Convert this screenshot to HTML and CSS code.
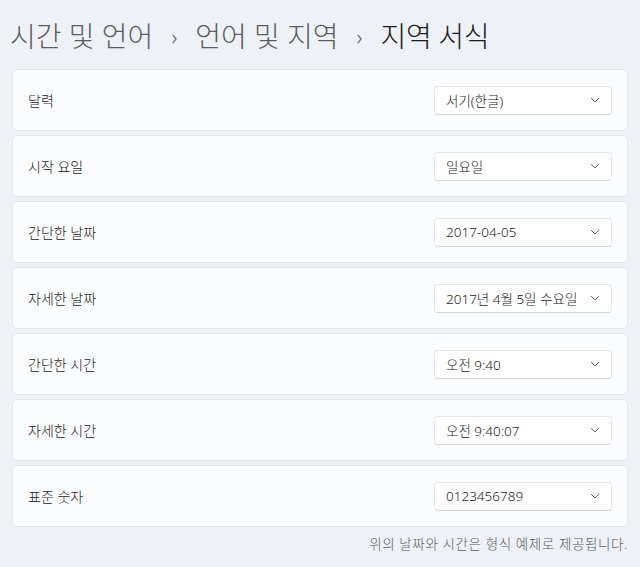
FILE: index.html
```html
<!DOCTYPE html>
<html lang="ko">
<head>
<meta charset="utf-8">
<link rel="stylesheet" href="styles.css">
</head>
<body>
<div class="page">
  <h1 class="crumbs">
    <span class="crumb">시간 및 언어</span>
    <span class="sep">›</span>
    <span class="crumb">언어 및 지역</span>
    <span class="sep">›</span>
    <span class="crumb current">지역 서식</span>
  </h1>
  <div class="list">
    <div class="card"><span class="label">달력</span><div class="select"><span>서기(한글)</span><svg class="chev" width="10" height="6" viewBox="0 0 10 6"><path d="M1 1l4 4 4-4" fill="none" stroke="#6b6b6b" stroke-width="1"/></svg></div></div>
    <div class="card"><span class="label">시작 요일</span><div class="select"><span>일요일</span><svg class="chev" width="10" height="6" viewBox="0 0 10 6"><path d="M1 1l4 4 4-4" fill="none" stroke="#6b6b6b" stroke-width="1"/></svg></div></div>
    <div class="card"><span class="label">간단한 날짜</span><div class="select"><span>2017-04-05</span><svg class="chev" width="10" height="6" viewBox="0 0 10 6"><path d="M1 1l4 4 4-4" fill="none" stroke="#6b6b6b" stroke-width="1"/></svg></div></div>
    <div class="card"><span class="label">자세한 날짜</span><div class="select"><span>2017년 4월 5일 수요일</span><svg class="chev" width="10" height="6" viewBox="0 0 10 6"><path d="M1 1l4 4 4-4" fill="none" stroke="#6b6b6b" stroke-width="1"/></svg></div></div>
    <div class="card"><span class="label">간단한 시간</span><div class="select"><span>오전 9:40</span><svg class="chev" width="10" height="6" viewBox="0 0 10 6"><path d="M1 1l4 4 4-4" fill="none" stroke="#6b6b6b" stroke-width="1"/></svg></div></div>
    <div class="card"><span class="label">자세한 시간</span><div class="select"><span>오전 9:40:07</span><svg class="chev" width="10" height="6" viewBox="0 0 10 6"><path d="M1 1l4 4 4-4" fill="none" stroke="#6b6b6b" stroke-width="1"/></svg></div></div>
    <div class="card"><span class="label">표준 숫자</span><div class="select"><span>0123456789</span><svg class="chev" width="10" height="6" viewBox="0 0 10 6"><path d="M1 1l4 4 4-4" fill="none" stroke="#6b6b6b" stroke-width="1"/></svg></div></div>
  </div>
  <p class="note">위의 날짜와 시간은 형식 예제로 제공됩니다.</p>
</div>
</body>
</html>
```
FILE: styles.css
```css
html, body {
  margin: 0;
  padding: 0;
  background: #eef2f6;
}
body {
  font-family: "Noto Sans", "Noto Sans CJK KR", sans-serif;
  color: #1b1b1b;
  width: 640px;
  height: 567px;
  overflow: hidden;
}
.page {
  padding: 14px 12px 0 12px;
}
.crumbs {
  margin: 0 0 0 -2px;
  height: 44px;
  display: flex;
  align-items: center;
  gap: 16px;
  font-size: 28px;
  font-weight: 300;
  color: #5c5c5c;
  line-height: 1;
}
.crumbs .sep {
  font-size: 22px;
  color: #5c5c5c;
  margin: 0 2px;
}
.crumbs .current {
  color: #1a1a1a;
  font-weight: 300;
  letter-spacing: -0.3px;
}
.list {
  margin-top: 11px;
  display: flex;
  flex-direction: column;
  gap: 4px;
}
.card {
  height: 60px;
  background: #fbfcfd;
  border: 1px solid #e3e6ea;
  border-radius: 5px;
  display: flex;
  align-items: center;
  justify-content: space-between;
  padding: 0 15px 0 15px;
}
.label {
  font-size: 14px;
  font-weight: 300;
  color: #1b1b1b;
}
.select {
  box-sizing: border-box;
  width: 178px;
  height: 29px;
  background: #ffffff;
  border: 1px solid #e4e6e9;
  border-bottom-color: #d3d5d8;
  border-radius: 4px;
  display: flex;
  align-items: center;
  justify-content: space-between;
  padding: 0 11px 0 11px;
  font-size: 13.5px;
  font-weight: 300;
  color: #1b1b1b;
}
.chev {
  display: block;
}
.note {
  margin: 6px 0 0 0;
  text-align: right;
  font-size: 13.5px;
  font-weight: 300;
  letter-spacing: 0.6px;
  color: #5a5a5a;
}
```
